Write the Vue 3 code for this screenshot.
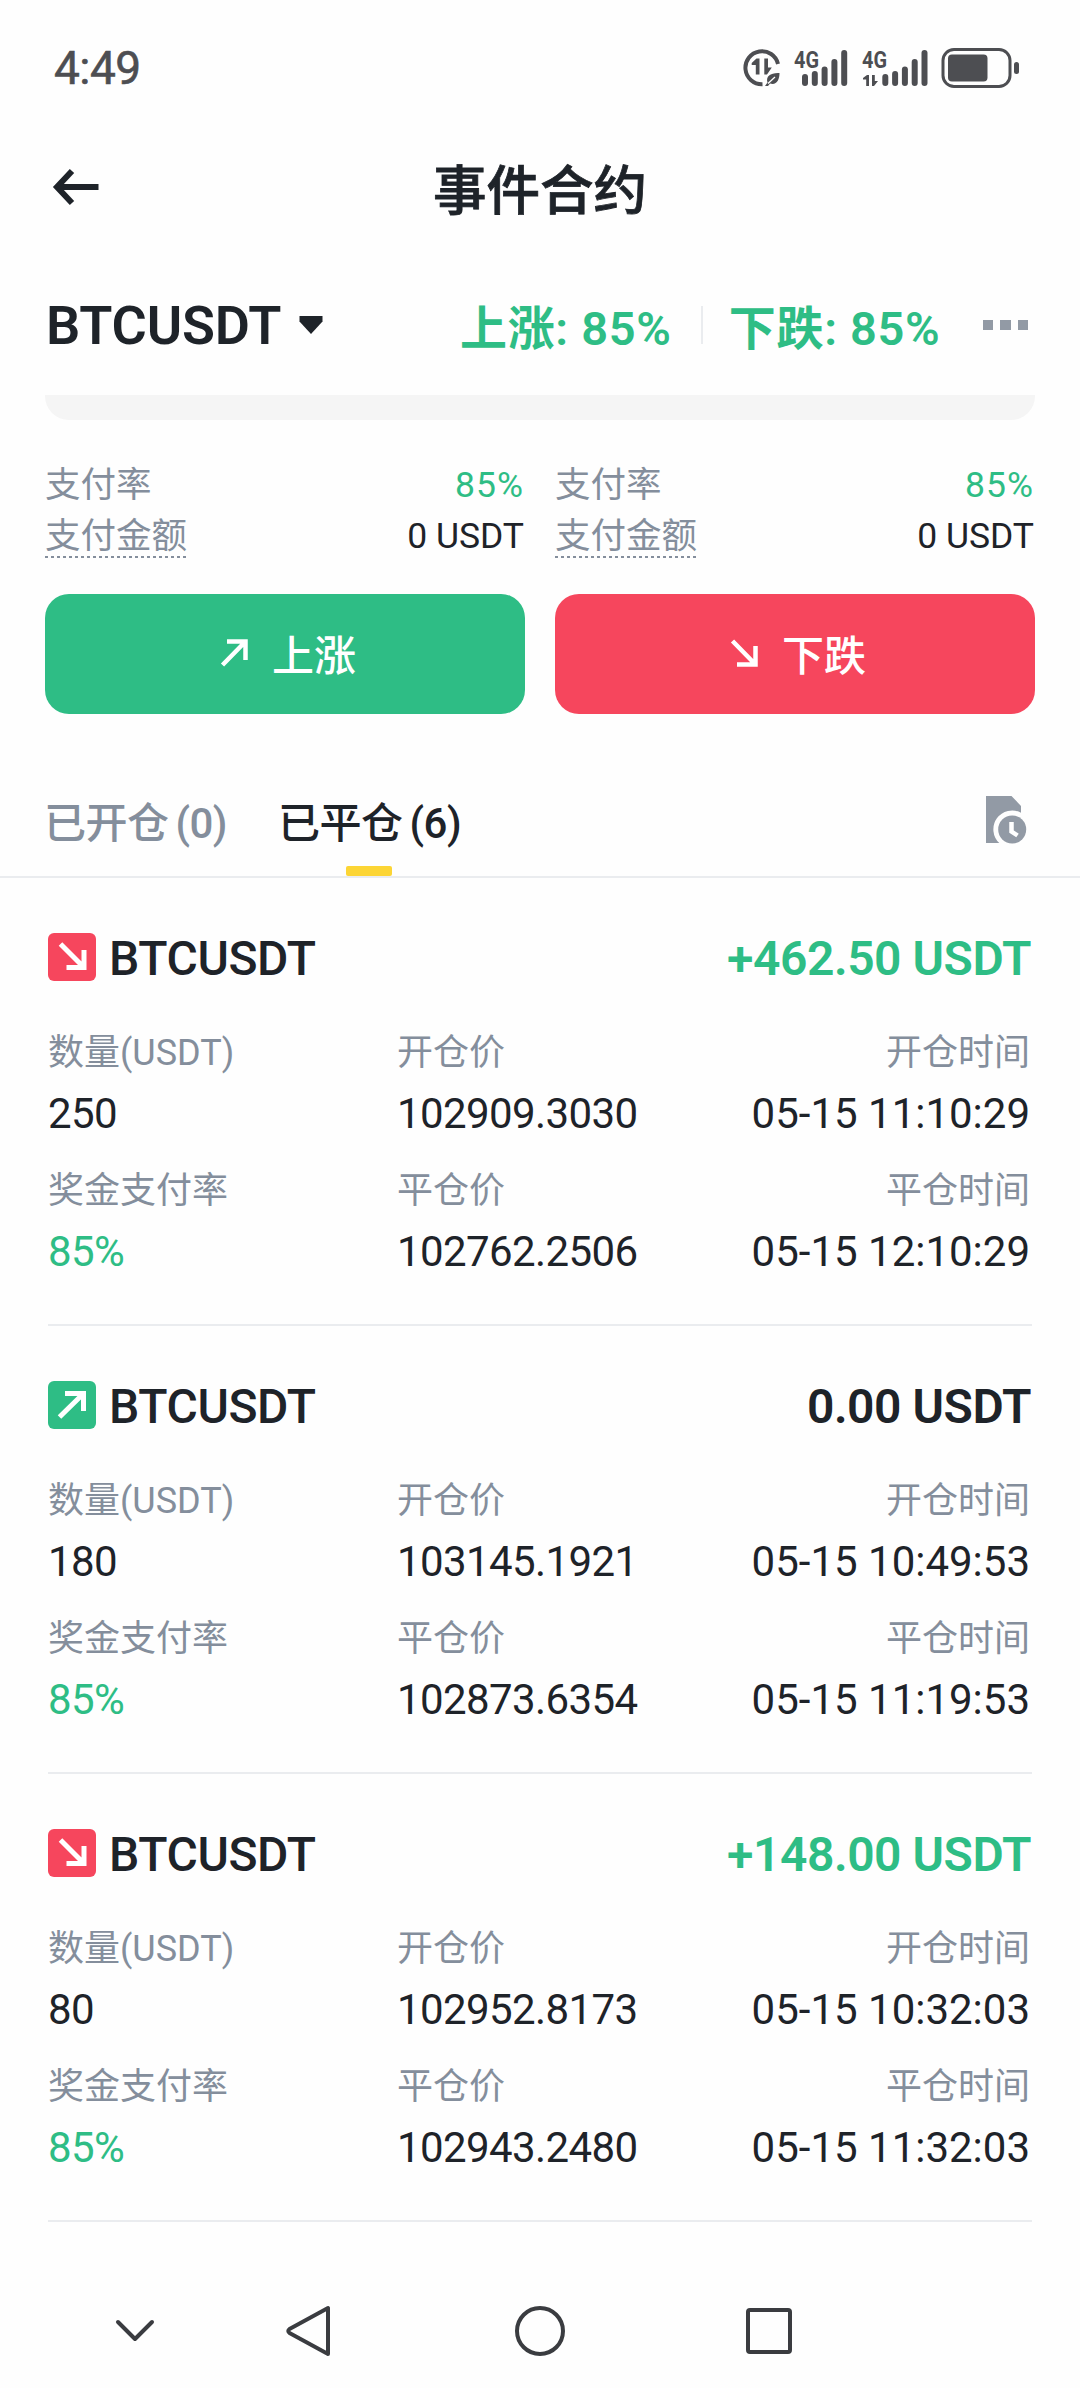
<script setup>
const sides = [
  { key: 'up', label: '上涨', path: 'M7 4.5H25.5V23M24.5 5.5L2.5 28' },
  { key: 'down', label: '下跌', path: 'M7 27.5H25.5V9M24.5 26.5L2.5 4' },
]

const trades = [
  { side: 'down', profit: '+462.50 USDT', win: true, amount: '250', open: '102909.3030', close: '102762.2506', openTime: '05-15 11:10:29', closeTime: '05-15 12:10:29' },
  { side: 'up', profit: '0.00 USDT', win: false, amount: '180', open: '103145.1921', close: '102873.6354', openTime: '05-15 10:49:53', closeTime: '05-15 11:19:53' },
  { side: 'down', profit: '+148.00 USDT', win: true, amount: '80', open: '102952.8173', close: '102943.2480', openTime: '05-15 10:32:03', closeTime: '05-15 11:32:03' },
]

const bars = [
  { x: 0, y: 24 },
  { x: 9.8, y: 21 },
  { x: 19.6, y: 16.5 },
  { x: 29.4, y: 9 },
  { x: 39.2, y: 0 },
]
</script>

<template>
  <div class="screen">
    <div class="status">
      <span class="time">4:49</span>
      <div class="status-icons">
        <svg class="data" width="38" height="38" viewBox="0 0 38 38">
          <path d="M35 15A16.5 16.5 0 1 0 19.5 35.2" fill="none" stroke="#4d4e52" stroke-width="4" />
          <path d="M16.500 9.500V25.500H12.800V16H8.700V14L13.500 9.500ZM21.300 9.500H25V18.500H28.800L24 25.500H21.300Z" fill="#4d4e52" />
          <path d="M36.5 24C28 23.5 22.5 27 24.5 33.5L22 37H25L27 34.500C33.500 36.500 36.500 31 36.500 24Z" fill="#4d4e52" />
          <path d="M25 34.500L32 28" stroke="#fff" stroke-width="1.300" />
        </svg>
        <svg class="signal-a" width="54" height="38" viewBox="0 0 54 38">
          <text class="net" x="0" y="19" textLength="25" lengthAdjust="spacingAndGlyphs">4G</text>
          <rect v-for="b in bars" :key="b.x" :x="b.x + 8" :y="b.y + 1" width="6" :height="36 - b.y" rx="3" fill="#4d4e52" />
        </svg>
        <svg class="signal-b" width="66" height="38" viewBox="0 0 66 38">
          <text class="net" x="0" y="19" textLength="25" lengthAdjust="spacingAndGlyphs">4G</text>
          <path d="M7 26V37H4.200V30.500H1V29L5 26ZM10 26H12.800V32H16L12 37H10Z" fill="#4d4e52" />
          <rect v-for="b in bars" :key="b.x" :x="b.x + 20.300" :y="b.y + 1" width="6" :height="36 - b.y" rx="3" fill="#4d4e52" />
        </svg>
        <svg class="battery" width="80" height="42" viewBox="0 0 80 42">
          <rect x="2" y="2.500" width="67" height="37" rx="11" fill="none" stroke="#4d4e52" stroke-width="3" />
          <rect x="7" y="7.500" width="39.500" height="27" rx="4" fill="#4d4e52" />
          <rect x="73" y="15" width="5" height="12" rx="2.500" fill="#4d4e52" />
        </svg>
      </div>
    </div>

    <header class="header">
      <svg class="back" width="46" height="36" viewBox="0 0 46 36">
        <path d="M19 2L4 18L19 34M4 18H45.500" fill="none" stroke="#1e2329" stroke-width="6" />
      </svg>
      <h1>事件合约</h1>
    </header>

    <section class="pair">
      <span class="symbol">BTCUSDT</span>
      <svg class="caret" width="24" height="18" viewBox="0 0 24 18">
        <path d="M0.500 0H23.500V5.500L12 18L0.500 5.500Z" fill="#1e2329" />
      </svg>
      <span class="rate">上涨: 85%</span>
      <i class="rule"></i>
      <span class="rate">下跌: 85%</span>
      <span class="more"><i></i><i></i><i></i></span>
    </section>

    <div class="sheet"></div>

    <section class="order">
      <div v-for="s in sides" :key="s.key" class="order-col">
        <div class="stat"><span>支付率</span><b class="green payout">85%</b></div>
        <div class="stat"><span class="dashed">支付金额</span><b class="sum">0 USDT</b></div>
        <button :class="s.key">
          <svg width="30" height="32" viewBox="0 0 30 32">
            <path :d="s.path" fill="none" stroke="#fff" stroke-width="4.500" />
          </svg>
          <span>{{ s.label }}</span>
        </button>
      </div>
    </section>

    <nav class="tabs">
      <span class="tab">已开仓 (0)</span>
      <span class="tab active">已平仓 (6)</span>
      <svg class="history" width="42" height="48" viewBox="0 0 42 48">
        <path d="M1 0H26.500L36 10V16.700A18.800 18.800 0 0 0 14.300 47H1Z" fill="#929aa5" />
        <circle cx="27.200" cy="33.500" r="14" fill="#929aa5" />
        <path d="M26.500 26V35.500L32.500 39.500" fill="none" stroke="#fff" stroke-width="4.500" />
      </svg>
    </nav>

    <main>
      <article v-for="t in trades" :key="t.openTime" class="trade">
        <div class="trade-head">
          <svg class="badge" :class="t.side" width="48" height="48" viewBox="0 0 48 48">
            <path v-if="t.side === 'down'" d="M18.500 34.500H36V17M35 33.500L12.500 11" />
            <path v-else d="M17 12.500H35.500V30M34.500 13.500L11.500 36" />
          </svg>
          <span class="name">BTCUSDT</span>
          <span class="profit" :class="{ green: t.win }">{{ t.profit }}</span>
        </div>
        <div class="cells">
          <div class="cell"><span>数量(USDT)</span><b>{{ t.amount }}</b></div>
          <div class="cell price"><span>开仓价</span><b>{{ t.open }}</b></div>
          <div class="cell when"><span>开仓时间</span><b>{{ t.openTime }}</b></div>
          <div class="cell"><span>奖金支付率</span><b class="green">85%</b></div>
          <div class="cell price"><span>平仓价</span><b>{{ t.close }}</b></div>
          <div class="cell when"><span>平仓时间</span><b>{{ t.closeTime }}</b></div>
        </div>
      </article>
    </main>

    <footer class="system-nav">
      <svg width="1080" height="60" viewBox="0 0 1080 60" fill="none" stroke="#3a3c40" stroke-width="4" stroke-linecap="round" stroke-linejoin="round">
        <path d="M118 21L135 38L152 21" />
        <path d="M328 7V53L289.500 32Q287 30 289.500 28Z" />
        <circle cx="540" cy="30" r="23" />
        <rect x="748" y="9" width="42" height="42" rx="2" />
      </svg>
    </footer>
  </div>
</template>

<style>
body {
  margin: 0;
  background: #fefefe;
}
</style>

<style scoped>
.screen {
  width: 1080px;
  height: 2388px;
  overflow: hidden;
  background: #fefefe;
  color: #1e2329;
  font-family: Roboto, "Noto Sans CJK SC", sans-serif;
  display: flex;
  flex-direction: column;
}
svg {
  display: block;
  flex: none;
  overflow: visible;
}
b { font-weight: 400; }
.green { color: #2ebd85 !important; }

.status {
  height: 136px;
  padding-left: 54px;
  display: flex;
  align-items: center;
  justify-content: space-between;
}
.time {
  font-size: 46px;
  color: #4d4e52;
  letter-spacing: -0.5px;
  -webkit-text-stroke: 0.6px #4d4e52;
}
.status-icons {
  width: 337px;
  display: flex;
  align-items: center;
}
.signal-a { margin-left: 13px; }
.signal-b { margin-left: 14px; }
.battery { margin-left: 13px; }
.net {
  font-size: 24px;
  font-weight: 700;
  fill: #4d4e52;
}

.header {
  height: 110px;
  display: grid;
  grid-template-columns: 180px 1fr 180px;
  align-items: center;
}
.back { margin: -8px 0 0 53px; }
h1 {
  margin: 2px 0 0;
  text-align: center;
  font-size: 53.5px;
  line-height: 108px;
  font-weight: 500;
  -webkit-text-stroke: 0.8px #1e2329;
}

.pair {
  height: 149px;
  box-sizing: border-box;
  padding: 8px 52px 0 46px;
  display: flex;
  align-items: center;
}
.symbol {
  font-size: 54px;
  line-height: 60px;
  font-weight: 600;
  width: 253px;
  margin-top: 2px;
  letter-spacing: -0.2px;
}
.rate {
  color: #2ebd85;
  font-size: 47px;
  line-height: 60px;
  font-weight: 600;
  margin-top: 8px;
  letter-spacing: 0.7px;
  white-space: nowrap;
}
.caret { margin-right: auto; }
.rule {
  width: 2px;
  height: 38px;
  background: #eaecef;
  margin: 0 26px 0 29px;
}
.more {
  display: flex;
  gap: 7px;
  margin-left: 42px;
}
.more i {
  width: 10.5px;
  height: 10px;
  background: #929aa5;
}

.sheet {
  height: 25px;
  margin: 0 45px;
  background: #f5f5f5;
  border-radius: 0 0 24px 24px;
}

.order {
  display: flex;
  gap: 30px;
  padding: 40px 45px 0;
}
.order-col { flex: 1; }
.stat {
  display: flex;
  justify-content: space-between;
  font-size: 35.5px;
  line-height: 51px;
  color: #848e9c;
}
.stat b { color: #1e2329; padding-right: 1px; }
.stat .payout { letter-spacing: 1px; }
.dashed {
  background: repeating-linear-gradient(90deg, #848e9c 0 3px, transparent 3px 6px) 0 45px / 100% 2px no-repeat;
}
button {
  width: 100%;
  height: 120px;
  margin-top: 32px;
  padding: 0 0 0 6px;
  border: 0;
  border-radius: 24px;
  display: flex;
  align-items: center;
  justify-content: center;
  gap: 22px;
  color: #fff;
  font: 500 42px/60px Roboto, "Noto Sans CJK SC", sans-serif;
}
button svg { margin-top: -2px; }
button span { margin-top: 6px; }
button.up { background: #2ebd85; }
button.down { background: #f6465d; }

.tabs {
  height: 162px;
  border-bottom: 2px solid #eaecef;
  padding: 0 53px 0 44px;
  display: flex;
  align-items: flex-end;
  gap: 51px;
}
.tab {
  font-size: 42px;
  line-height: 104px;
  font-weight: 500;
  color: #848e9c;
  position: relative;
  letter-spacing: -0.5px;
  word-spacing: -3px;
}
.tab.active { color: #1e2329; }
.tab.active::after {
  content: "";
  position: absolute;
  left: 50%;
  bottom: 0;
  width: 46px;
  height: 10px;
  margin-left: -24px;
  border-radius: 2px;
  background: #fcd535;
}
.history { margin: 0 0 32px auto; }

.trade {
  height: 448px;
  box-sizing: border-box;
  margin: 0 48px;
  padding-top: 55px;
  border-bottom: 2px solid #eaecef;
}
.trade-head {
  height: 48px;
  display: flex;
  align-items: center;
}
.badge {
  border-radius: 6px;
  fill: none;
  stroke: #fff;
  stroke-width: 5px;
}
.badge.up { background: #2ebd85; }
.badge.down { background: #f6465d; }
.name {
  margin: 3px 0 0 13px;
  font-size: 48px;
  font-weight: 500;
  letter-spacing: -0.4px;
}
.profit {
  margin: 3px 1px 0 auto;
  font-size: 48px;
  font-weight: 600;
  letter-spacing: -0.45px;
}
.cells {
  margin-top: 47px;
  display: grid;
  grid-template-columns: 349px 1fr auto;
  row-gap: 16px;
}
.cell {
  display: flex;
  flex-direction: column;
}
.cell span {
  font-size: 36px;
  line-height: 50px;
  color: #848e9c;
}
.cell b {
  font-size: 42px;
  line-height: 72px;
  letter-spacing: -0.6px;
}
.cell.when { align-items: flex-end; padding-right: 2px; }
.cell.when b { letter-spacing: 0; }

.system-nav { margin-top: 79px; }
</style>
